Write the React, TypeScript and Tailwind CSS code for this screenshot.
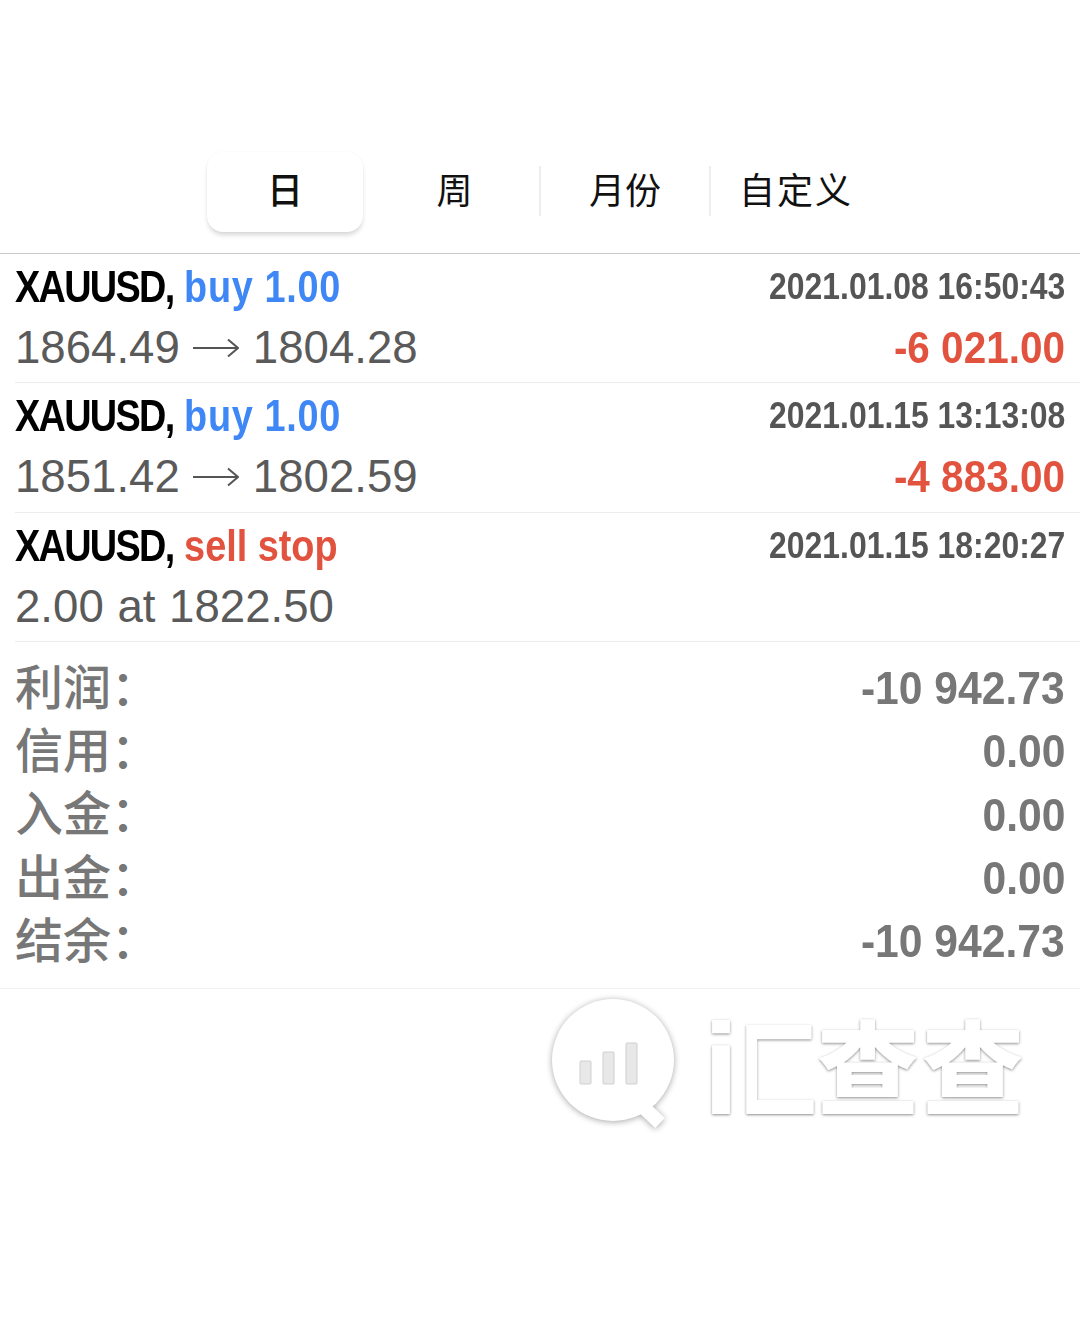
const latin = "font-['Liberation_Sans','Noto_Sans_CJK_SC',sans-serif]";

function Arrow() {
  return (
    <svg width="46" height="24" viewBox="0 0 46 24" fill="none" stroke="#555" strokeWidth="2" className="ml-[13px] mr-[14px] inline-block">
      <path d="M0 12H45M35 3.5L45 12L35 20.5" />
    </svg>
  );
}

function Trade({ kind, kindColor, date, detail, profit }: { kind: string; kindColor: string; date: string; detail: React.ReactNode; profit?: string }) {
  return (
    <div className="ml-[15px] h-[129.5px] border-b border-[#ececec] pr-[15px]">
      <div className="flex h-[65px] items-center justify-between pt-[1px]">
        <div className="origin-left scale-x-[0.86] whitespace-nowrap text-[44px] leading-none font-bold text-black">
          <span className="tracking-[-1.95px]">XAUUSD,</span> <span className={kindColor}>{kind}</span>
        </div>
        <div className="origin-right scale-x-[0.886] whitespace-nowrap text-[36px] leading-none font-bold text-[#555]">{date}</div>
      </div>
      <div className="flex h-[58px] items-center justify-between">
        <div className="flex items-center whitespace-nowrap text-[45.6px] leading-none text-[#5a5a5a] [word-spacing:1px]">{detail}</div>
        {profit && <div className="origin-right scale-x-[0.92] whitespace-nowrap text-[44px] leading-none font-bold text-[#e2533f]">{profit}</div>}
      </div>
    </div>
  );
}

function Summary({ label, value }: { label: string; value: string }) {
  return (
    <div className="flex h-[63.3px] items-center justify-between text-[#777]">
      <div className="whitespace-nowrap pt-[2px] text-[48px] leading-none font-medium">{label}</div>
      <div className="origin-right scale-x-[0.907] whitespace-nowrap text-[47px] leading-none font-bold">{value}</div>
    </div>
  );
}

function Tab({ label, active, className }: { label: string; active?: boolean; className: string }) {
  return (
    <div className={`flex h-[80px] items-center justify-center pt-[1px] text-[36px] leading-none text-[#111] ${className}`}>
      {active ? (
        <div className="flex h-[80px] w-[156px] items-center justify-center rounded-[16px] bg-white font-medium shadow-[0_4px_5px_-1px_rgba(0,0,0,0.16),0_0_2px_rgba(0,0,0,0.05)]">{label}</div>
      ) : (
        label
      )}
    </div>
  );
}

function Logo() {
  return (
    <div className="ml-[550px] mt-[7px] flex items-start">
      <svg width="130" height="136" viewBox="0 0 130 136" className="drop-shadow-[0_1px_3px_rgba(0,0,0,0.35)]">
        <path d="M92 110L110 127" stroke="#fff" strokeWidth="14" />
        <circle cx="63" cy="64" r="61" fill="#fff" />
        <g fill="#e8e8e8" stroke="#cfcfcf">
          <rect x="30" y="65" width="11" height="23" rx="1" />
          <rect x="53" y="56" width="11" height="32" rx="1" />
          <rect x="76" y="47" width="11" height="41" rx="1" />
        </g>
      </svg>
      <div className="ml-[23px] mt-[18px] flex h-[116px] items-center whitespace-nowrap leading-none font-black text-white [text-shadow:0_1px_3px_rgba(0,0,0,0.45)]">
        <span className="w-[36px] -translate-y-[3px] text-[130px] font-bold">i</span>
        <span className="inline-block w-[78px] origin-left scale-x-[0.76] text-[105px]">匚</span>
        <span className="text-[102px] tracking-[3px]">查查</span>
      </div>
    </div>
  );
}

export default function App() {
  return (
    <div className={`${latin} min-h-[1331px] w-[1080px] overflow-hidden bg-white`}>
      <div className="h-[253.5px] border-b border-[#c9c9c9] pt-[151px]">
        <div className="ml-[200px] flex items-center">
          <Tab label="日" active className="w-[170px]" />
          <Tab label="周" className="w-[169px]" />
          <div className="h-[50px] w-[2px] bg-[#eeeeee]" />
          <Tab label="月份" className="w-[168px]" />
          <div className="h-[50px] w-[2px] bg-[#eeeeee]" />
          <Tab label="自定义" className="w-[170px] tracking-[2px]" />
        </div>
      </div>
      <Trade kind="buy 1.00" kindColor="tracking-[0.8px] text-[#3f87f5]" date="2021.01.08 16:50:43" detail={<>1864.49<Arrow />1804.28</>} profit="-6 021.00" />
      <Trade kind="buy 1.00" kindColor="tracking-[0.8px] text-[#3f87f5]" date="2021.01.15 13:13:08" detail={<>1851.42<Arrow />1802.59</>} profit="-4 883.00" />
      <Trade kind="sell stop" kindColor="text-[#e2533f]" date="2021.01.15 18:20:27" detail="2.00 at 1822.50" />
      <div className="h-[347px] border-b border-[#f0f0f0] px-[15px] pt-[14px]">
        <Summary label="利润：" value="-10 942.73" />
        <Summary label="信用：" value="0.00" />
        <Summary label="入金：" value="0.00" />
        <Summary label="出金：" value="0.00" />
        <Summary label="结余：" value="-10 942.73" />
      </div>
      <Logo />
    </div>
  );
}
